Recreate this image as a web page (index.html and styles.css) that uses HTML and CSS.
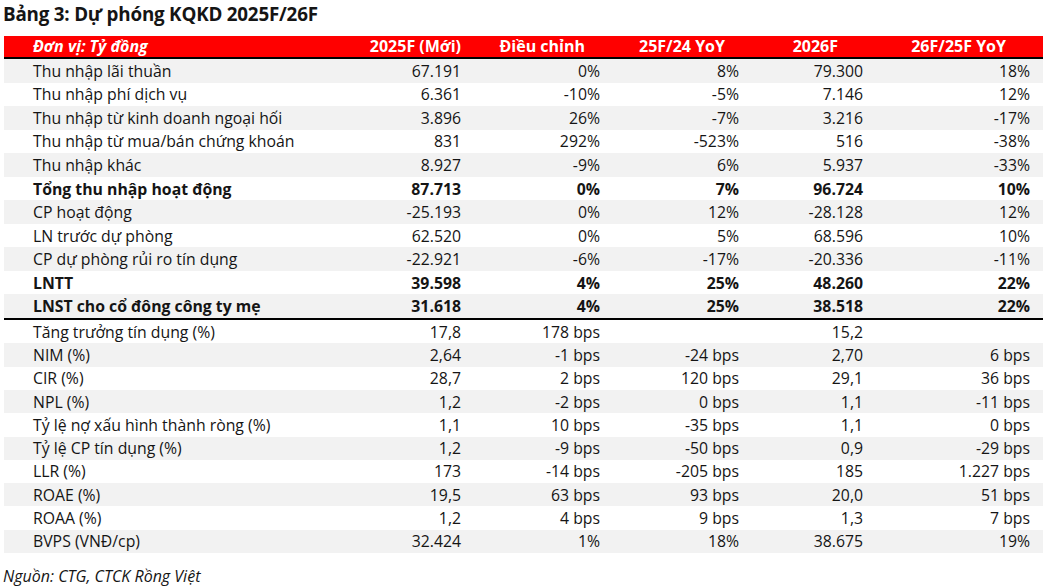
FILE: index.html
```html
<!DOCTYPE html>
<html lang="vi">
<head>
<meta charset="utf-8">
<title>Bảng 3</title>
<link rel="stylesheet" href="styles.css">
</head>
<body>
<h1 class="title">Bảng 3: Dự phóng KQKD 2025F/26F</h1>
<div class="tbl">
  <div class="row head">
    <div class="lbl">Đơn vị: Tỷ đồng</div>
    <div class="h1">2025F (Mới)</div>
    <div class="h2">Điều chỉnh</div>
    <div class="h3">25F/24 YoY</div>
    <div class="h4">2026F</div>
    <div class="h5">26F/25F YoY</div>
    <div></div>
  </div>
  <div class="sec sec1">
    <div class="row"><div>Thu nhập lãi thuần</div><div>67.191</div><div>0%</div><div>8%</div><div>79.300</div><div>18%</div><div></div></div>
    <div class="row"><div>Thu nhập phí dịch vụ</div><div>6.361</div><div>-10%</div><div>-5%</div><div>7.146</div><div>12%</div><div></div></div>
    <div class="row"><div>Thu nhập từ kinh doanh ngoại hối</div><div>3.896</div><div>26%</div><div>-7%</div><div>3.216</div><div>-17%</div><div></div></div>
    <div class="row"><div>Thu nhập từ mua/bán chứng khoán</div><div>831</div><div>292%</div><div>-523%</div><div>516</div><div>-38%</div><div></div></div>
    <div class="row"><div>Thu nhập khác</div><div>8.927</div><div>-9%</div><div>6%</div><div>5.937</div><div>-33%</div><div></div></div>
    <div class="row bold"><div>Tổng thu nhập hoạt động</div><div>87.713</div><div>0%</div><div>7%</div><div>96.724</div><div>10%</div><div></div></div>
    <div class="row"><div>CP hoạt động</div><div>-25.193</div><div>0%</div><div>12%</div><div>-28.128</div><div>12%</div><div></div></div>
    <div class="row"><div>LN trước dự phòng</div><div>62.520</div><div>0%</div><div>5%</div><div>68.596</div><div>10%</div><div></div></div>
    <div class="row"><div>CP dự phòng rủi ro tín dụng</div><div>-22.921</div><div>-6%</div><div>-17%</div><div>-20.336</div><div>-11%</div><div></div></div>
    <div class="row bold"><div>LNTT</div><div>39.598</div><div>4%</div><div>25%</div><div>48.260</div><div>22%</div><div></div></div>
    <div class="row bold"><div>LNST cho cổ đông công ty mẹ</div><div>31.618</div><div>4%</div><div>25%</div><div>38.518</div><div>22%</div><div></div></div>
  </div>
  <div class="sec sec2">
    <div class="row"><div>Tăng trưởng tín dụng (%)</div><div>17,8</div><div>178 bps</div><div></div><div>15,2</div><div></div><div></div></div>
    <div class="row"><div>NIM (%)</div><div>2,64</div><div>-1 bps</div><div>-24 bps</div><div>2,70</div><div>6 bps</div><div></div></div>
    <div class="row"><div>CIR (%)</div><div>28,7</div><div>2 bps</div><div>120 bps</div><div>29,1</div><div>36 bps</div><div></div></div>
    <div class="row"><div>NPL (%)</div><div>1,2</div><div>-2 bps</div><div>0 bps</div><div>1,1</div><div>-11 bps</div><div></div></div>
    <div class="row"><div>Tỷ lệ nợ xấu hình thành ròng (%)</div><div>1,1</div><div>10 bps</div><div>-35 bps</div><div>1,1</div><div>0 bps</div><div></div></div>
    <div class="row"><div>Tỷ lệ CP tín dụng (%)</div><div>1,2</div><div>-9 bps</div><div>-50 bps</div><div>0,9</div><div>-29 bps</div><div></div></div>
    <div class="row"><div>LLR (%)</div><div>173</div><div>-14 bps</div><div>-205 bps</div><div>185</div><div>1.227 bps</div><div></div></div>
    <div class="row"><div>ROAE (%)</div><div>19,5</div><div>63 bps</div><div>93 bps</div><div>20,0</div><div>51 bps</div><div></div></div>
    <div class="row"><div>ROAA (%)</div><div>1,2</div><div>4 bps</div><div>9 bps</div><div>1,3</div><div>7 bps</div><div></div></div>
    <div class="row"><div>BVPS (VNĐ/cp)</div><div>32.424</div><div>1%</div><div>18%</div><div>38.675</div><div>19%</div><div></div></div>
  </div>
</div>
<p class="source">Nguồn: CTG, CTCK Rồng Việt</p>
</body>
</html>
```

FILE: styles.css
```css
* { box-sizing: border-box; }
html, body { margin: 0; padding: 0; background: #fff; }
body {
  font-family: "Open Sans", "Noto Sans", sans-serif;
  color: #151515;
  width: 1047px;
  height: 587px;
  overflow: hidden;
}
.title {
  margin: 0;
  padding: 0 0 0 3px;
  height: 36px;
  font-size: 18.8px;
  font-weight: 700;
  line-height: 28px;
  letter-spacing: -0.2px;
}
.tbl {
  margin-left: 4px;
  width: 1039px;
  font-size: 15.8px;
}
.row {
  display: grid;
  grid-template-columns: 300px 157px 139px 139px 124px 167px 13px;
  align-items: center;
  height: 23.55px;
  white-space: nowrap;
}
.row > div { text-align: right; line-height: 22px; }
.row > div:first-child { text-align: left; padding-left: 29px; }
.head {
  background: #ff0000;
  color: #fff;
  height: 23px;
  border-bottom: 2px solid #000;
  font-size: 16px;
  font-weight: 700;
}
.head > div { line-height: 21px; }
.head .lbl { font-style: italic; }
.head .h2 { padding-right: 15px; }
.head .h3 { padding-right: 14px; }
.head .h4 { padding-right: 25px; }
.head .h5 { padding-right: 24px; }
.sec1 { border-bottom: 2px solid #000; }
.sec1 .row:nth-child(odd) { background: #f2f2f2; }
.sec2 .row { height: 23.3px; }
.sec2 .row:nth-child(even) { background: #f2f2f2; }
.bold { font-weight: 700; }
.source {
  margin: 0;
  padding: 12px 0 0 3px;
  font-size: 16px;
  line-height: 22px;
  font-style: italic;
}
```
